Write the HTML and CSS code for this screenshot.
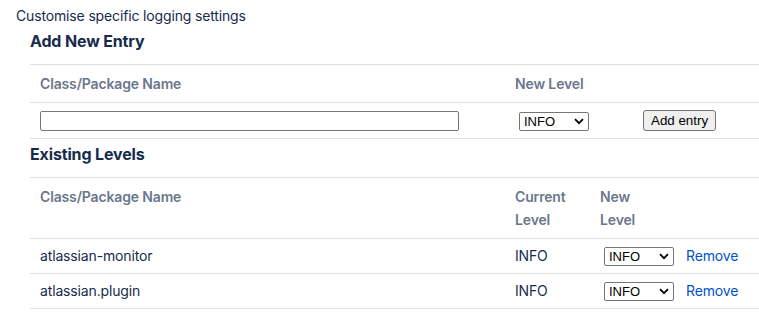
FILE: index.html
```html
<!DOCTYPE html>
<html lang="en">
<head>
    <meta charset="UTF-8">
    <title>Logging settings</title>
    <link rel="stylesheet" href="styles.css">
</head>
<body>
    <p class="intro">Customise specific logging settings</p>

    <div class="section">
        <h3>Add New Entry</h3>
        <table class="levels">
            <thead>
                <tr>
                    <th class="col-name">Class/Package Name</th>
                    <th class="col-new-entry">New Level</th>
                    <th class="col-action"></th>
                </tr>
            </thead>
            <tbody>
                <tr>
                    <td><input type="text" class="name-input"></td>
                    <td>
                        <span class="select-wrap">
                            <select class="level-select">
                                <option>INFO</option>
                                <option>DEBUG</option>
                                <option>WARN</option>
                                <option>ERROR</option>
                            </select>
                            <svg class="chevron" width="10" height="7" viewBox="0 0 10 7"><path d="M1 1.2l4 4 4-4" fill="none" stroke="#000" stroke-width="1.8"/></svg>
                        </span>
                    </td>
                    <td><button class="add-btn">Add entry</button></td>
                </tr>
            </tbody>
        </table>

        <h3 class="second">Existing Levels</h3>
        <table class="levels">
            <thead>
                <tr>
                    <th class="col-name">Class/Package Name</th>
                    <th class="col-current">Current Level</th>
                    <th class="col-new">New Level</th>
                    <th class="col-remove"></th>
                </tr>
            </thead>
            <tbody>
                <tr>
                    <td>atlassian-monitor</td>
                    <td>INFO</td>
                    <td>
                        <span class="select-wrap">
                            <select class="level-select">
                                <option>INFO</option>
                                <option>DEBUG</option>
                                <option>WARN</option>
                                <option>ERROR</option>
                            </select>
                            <svg class="chevron" width="10" height="7" viewBox="0 0 10 7"><path d="M1 1.2l4 4 4-4" fill="none" stroke="#000" stroke-width="1.8"/></svg>
                        </span>
                    </td>
                    <td><a href="#" class="remove">Remove</a></td>
                </tr>
                <tr>
                    <td>atlassian.plugin</td>
                    <td>INFO</td>
                    <td>
                        <span class="select-wrap">
                            <select class="level-select">
                                <option>INFO</option>
                                <option>DEBUG</option>
                                <option>WARN</option>
                                <option>ERROR</option>
                            </select>
                            <svg class="chevron" width="10" height="7" viewBox="0 0 10 7"><path d="M1 1.2l4 4 4-4" fill="none" stroke="#000" stroke-width="1.8"/></svg>
                        </span>
                    </td>
                    <td><a href="#" class="remove">Remove</a></td>
                </tr>
            </tbody>
        </table>
    </div>
</body>
</html>
```

FILE: styles.css
```css
body {
    font-family: Inter, "Noto Sans", sans-serif;
    font-size: 14px;
    line-height: 20px;
    letter-spacing: -0.15px;
    color: #172B4D;
    margin: 0;
    padding: 6px 0 0 16px;
}
.intro {
    margin: 0;
}
.section {
    padding-left: 14px;
}
h3 {
    font-size: 16px;
    line-height: 20px;
    font-weight: 700;
    color: #172B4D;
    margin: 5px 0 13px;
}
h3.second {
    margin: 5px 0 13px;
}
.levels {
    width: 729px;
    border-collapse: collapse;
    table-layout: fixed;
}
.levels th {
    box-sizing: border-box;
    text-align: left;
    font-weight: 600;
    color: #6B778C;
    line-height: 23px;
    padding: 7px 10px;
    border-top: 1px solid #DFE1E6;
    border-bottom: 1px solid #DFE1E6;
    vertical-align: top;
}
.levels td {
    height: 20px;
    padding: 7px 10px;
    border-bottom: 1px solid #DFE1E6;
    vertical-align: middle;
}
.col-name {
    width: 475px;
}
.col-new-entry {
    width: 128px;
}
.col-current {
    width: 85px;
}
.col-new {
    width: 86px;
}
.name-input {
    display: block;
    width: 419px;
    height: 20px;
    box-sizing: border-box;
    border: 1px solid #767676;
    border-radius: 2px;
    margin: 1px 0 0;
    padding: 0 4px;
}
.select-wrap {
    position: relative;
    display: inline-block;
    vertical-align: top;
    margin-top: 1px;
}
.level-select {
    display: block;
    appearance: none;
    -webkit-appearance: none;
    width: 70px;
    height: 19px;
    box-sizing: border-box;
    border: 1px solid #767676;
    border-radius: 2px;
    background: #fff;
    font-family: "Liberation Sans", Arial, sans-serif;
    font-size: 13px;
    color: #000;
    padding: 0 0 0 4px;
    margin-left: 4px;
}
.chevron {
    position: absolute;
    right: 5px;
    top: 6px;
    pointer-events: none;
}
.add-btn {
    font-family: "Liberation Sans", Arial, sans-serif;
    font-size: 13.33px;
    color: #000;
    background: #EFEFEF;
    border: 1px solid #767676;
    border-radius: 3px;
    height: 21px;
    padding: 0 7px;
    margin-top: -1px;
    vertical-align: top;
}
.remove {
    color: #0052CC;
    text-decoration: none;
}
```
